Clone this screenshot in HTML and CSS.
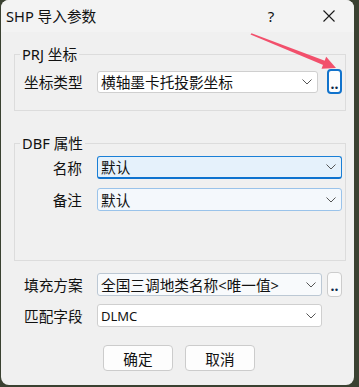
FILE: index.html
```html
<!DOCTYPE html>
<html lang="zh">
<head>
    <meta charset="UTF-8">
    <title>SHP 导入参数</title>
    <link rel="stylesheet" href="styles.css">
</head>
<body>
    <div class="window">
        <div class="titlebar">
            <span class="title">SHP 导入参数</span>
            <span class="cap-btn help">?</span>
            <span class="cap-btn close">
                <svg width="12" height="12" viewBox="0 0 12 12"><path d="M0.5 0.5 L11.5 11.5 M11.5 0.5 L0.5 11.5" stroke="#1a1a1a" stroke-width="1.1" fill="none"/></svg>
            </span>
        </div>

        <div class="content">
            <fieldset class="group prj">
                <legend>PRJ 坐标</legend>
                <div class="row">
                    <label class="lbl">坐标类型</label>
                    <div class="combo w221">
                        <span class="combo-text">横轴墨卡托投影坐标</span>
                        <svg class="chev" width="10" height="6" viewBox="0 0 10 6"><polyline points="0.5,0.5 5,5 9.5,0.5" fill="none" stroke="#555" stroke-width="1"/></svg>
                    </div>
                    <button class="dots focused">..</button>
                </div>
            </fieldset>

            <fieldset class="group dbf">
                <legend>DBF 属性</legend>
                <div class="row">
                    <label class="lbl">名称</label>
                    <div class="combo w245 active">
                        <span class="combo-text">默认</span>
                        <svg class="chev" width="10" height="6" viewBox="0 0 10 6"><polyline points="0.5,0.5 5,5 9.5,0.5" fill="none" stroke="#555" stroke-width="1"/></svg>
                    </div>
                </div>
                <div class="row">
                    <label class="lbl">备注</label>
                    <div class="combo w245 hover">
                        <span class="combo-text">默认</span>
                        <svg class="chev" width="10" height="6" viewBox="0 0 10 6"><polyline points="0.5,0.5 5,5 9.5,0.5" fill="none" stroke="#555" stroke-width="1"/></svg>
                    </div>
                </div>
            </fieldset>

            <div class="row outer fill">
                <label class="lbl">填充方案</label>
                <div class="combo w225 soft">
                    <span class="combo-text">全国三调地类名称&lt;唯一值&gt;</span>
                    <svg class="chev" width="10" height="6" viewBox="0 0 10 6"><polyline points="0.5,0.5 5,5 9.5,0.5" fill="none" stroke="#555" stroke-width="1"/></svg>
                </div>
                <button class="dots">..</button>
            </div>

            <div class="row outer match">
                <label class="lbl">匹配字段</label>
                <div class="combo w225">
                    <span class="combo-text latin">DLMC</span>
                    <svg class="chev" width="10" height="6" viewBox="0 0 10 6"><polyline points="0.5,0.5 5,5 9.5,0.5" fill="none" stroke="#555" stroke-width="1"/></svg>
                </div>
            </div>

            <div class="actions">
                <button class="btn">确定</button>
                <button class="btn">取消</button>
            </div>
        </div>

        <!-- annotation arrow drawn over the dialog -->
        <svg class="arrow" width="353" height="100" viewBox="0 0 353 100">
            <polygon points="250.5,34.5 251.5,33.2 325.5,61 323.8,65.2" fill="#f2506c"/>
            <polygon points="336,68 321.5,68.8 326.2,56.8" fill="#f2506c"/>
        </svg>
    </div>
</body>
</html>
```

FILE: styles.css
```css
body {
    margin: 0;
    background-color: #3a4131;
    font-family: 'Noto Sans', 'Noto Sans CJK SC', sans-serif;
    font-size: 14.67px;
    color: #111;
}
.window {
    position: relative;
    margin-left: 1px;
    width: 353px;
    height: 385px;
    background-color: #f0f0f0;
    border-radius: 8px;
    overflow: hidden;
}
.titlebar {
    height: 32px;
    background-color: #f3f3f3;
    display: flex;
    align-items: center;
}
.title {
    padding-left: 5px;
    font-size: 14.67px;
    line-height: 16px;
}
.cap-btn {
    display: flex;
    align-items: center;
    justify-content: center;
    height: 32px;
}
.help {
    margin-left: auto;
    width: 46px;
    font-size: 15px;
}
.close {
    width: 46px;
    margin-left: 12px;
    margin-right: 2px;
}
.content {
    padding: 0 8px 0 13px;
}
.group {
    margin: 14px 0 0 0;
    padding: 7px 0 16px 9px;
    border: 1px solid #dcdcdc;
    min-inline-size: 0;
}
.group legend {
    padding: 0 2px;
    margin-left: -4px;
    line-height: 16px;
}
.group.dbf {
    margin-top: 24px;
    padding-top: 5px;
    padding-bottom: 49px;
}
.group.dbf .row + .row {
    margin-top: 9px;
}
.row {
    display: flex;
    align-items: center;
}
.row.outer {
    padding-left: 10px;
}
.row.fill {
    margin-top: 11px;
}
.row.match {
    margin-top: 7px;
}
.lbl {
    width: 58px;
    margin-right: 15px;
    text-align: right;
    white-space: nowrap;
    line-height: 18px;
}
.combo {
    box-sizing: border-box;
    height: 23px;
    display: flex;
    align-items: center;
    background-color: #fff;
    border: 1px solid #cfcfcf;
    border-radius: 3px;
    padding: 0 5px 0 3px;
}
.prj .combo {
    height: 22px;
}
.combo-text {
    flex: 1;
    white-space: nowrap;
    line-height: 18px;
}
.combo-text.latin {
    font-size: 13px;
}
.chev {
    flex: none;
}
.w221 { width: 221px; }
.w225 { width: 225px; }
.w245 { width: 245px; }
.combo.active {
    background-color: #e5f1fb;
    border-color: #1a7fd6;
    border-bottom: 2px solid #0e73cf;
}
.combo.hover {
    background-color: #f4f8fc;
    border-color: #9ac3ea;
}
.combo.soft {
    background-color: #f8fafc;
    border-color: #bcc8d4;
}
.dots {
    box-sizing: border-box;
    width: 15px;
    height: 25px;
    margin-left: 9px;
    padding: 0 0 2px 0;
    border: 1px solid #cccccc;
    border-radius: 4px;
    background-color: #fbfbfb;
    font-family: inherit;
    font-size: 14px;
    font-weight: 700;
    line-height: 25px;
    color: #0c2a4a;
}
.row.fill .dots {
    margin-left: 5px;
}
.dots.focused {
    border: 2px solid #1173cc;
    background-color: #fdfdfd;
}
.actions {
    display: flex;
    gap: 12px;
    margin-top: 18px;
    padding-left: 89px;
}
.btn {
    box-sizing: border-box;
    width: 70px;
    height: 26px;
    background-color: #fdfdfd;
    border: 1px solid #cccccc;
    border-radius: 4px;
    font-family: inherit;
    font-size: 14.67px;
    color: #111;
    padding: 0;
}
.arrow {
    position: absolute;
    left: -1px;
    top: 0;
    pointer-events: none;
}
```
